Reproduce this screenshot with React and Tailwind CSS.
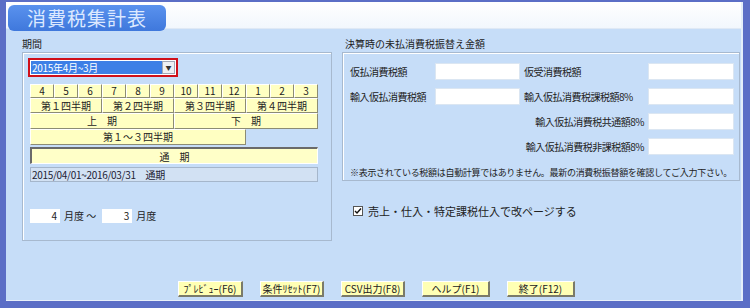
import React from 'react'

const font = { fontFamily: '"Noto Sans CJK JP", "Noto Sans", sans-serif' }

function Cell({ children, w, h = 'h-[14px]' }) {
  return (
    <div className={`${w} ${h} bg-[#ffffc2] border-t border-l border-t-white border-l-white border-r border-b border-r-[#8c8c74] border-b-[#8c8c74] flex items-center justify-center text-[10px] leading-none text-[#222] whitespace-nowrap`}>
      {children}
    </div>
  )
}

function Field({ w = 'w-[85px]' }) {
  return <div className={`${w} h-[17px] bg-white border border-[#dbe6f2]`} />
}

export default function App() {
  const months = ['4', '5', '6', '7', '8', '9', '10', '11', '12', '1', '2', '3']
  const quarters = ['第１四半期', '第２四半期', '第３四半期', '第４四半期']
  const buttons = [
    ['ﾌﾟﾚﾋﾞｭｰ(F6)', 'w-[65px]'],
    ['条件ﾘｾｯﾄ(F7)', 'w-[64px]'],
    ['CSV出力(F8)', 'w-[64px]'],
    ['ヘルプ(F1)', 'w-[68px]'],
    ['終了(F12)', 'w-[68px]'],
  ]

  return (
    <div style={font} className="w-[750px] h-[308px] bg-[#5b6ec6] pt-[2px] pl-[6px] pr-[7px] pb-[7px] overflow-hidden">
      <div className="h-full bg-[#c6ddf8] flex flex-col border-r-2 border-r-[#e4eefa]">
        {/* header */}
        <div className="h-[27px] bg-gradient-to-b from-white to-[#f2f7fd] border-b border-[#dfe9f5] flex">
          <div className="ml-[2px] mt-[3px] w-[158px] h-[26px] rounded-[6px] bg-gradient-to-b from-[#5a92ee] to-[#3f78dc] flex items-center justify-center text-[19px] text-[#dce9ff] tracking-[1px] z-10">
            消費税集計表
          </div>
        </div>

        <div className="flex pl-[16px] pr-[1px] pt-[9px] gap-[10px]">
          {/* left column */}
          <div className="w-[310px] flex flex-col">
            <div className="text-[10px] leading-[12px] text-[#222] h-[13px]">期間</div>
            <div className="mt-[1px] h-[189px] border border-[#a7b9cf] shadow-[inset_1px_1px_0_#ffffff] pl-[5px] pt-[5px]">
              <div className="w-[150px] h-[19px] border-2 border-[#d0101a] p-[1px] flex bg-white">
                <div className="flex-1 bg-[#3d7fe6] text-white text-[10px] leading-[13px] pl-[1px] tracking-[-0.3px]">2015年4月~3月</div>
                <div className="w-[13px] bg-[#eef0f4] border border-[#a0a8b8] flex items-center justify-center text-[6px] text-[#333]">▼</div>
              </div>
              <div className="mt-[7px] ml-[2px] w-[288px] flex flex-col">
                <div className="flex">
                  {months.map((m) => <Cell key={m} w="w-[24px]">{m}</Cell>)}
                </div>
                <div className="flex">
                  {quarters.map((q) => <Cell key={q} w="w-[72px]" h="h-[15px]">{q}</Cell>)}
                </div>
                <div className="flex">
                  <Cell w="w-[144px]" h="h-[16px]">上　期</Cell>
                  <Cell w="w-[144px]" h="h-[16px]">下　期</Cell>
                </div>
                <div className="flex">
                  <Cell w="w-[216px]" h="h-[16px]">第１～３四半期</Cell>
                </div>
                <div className="mt-[2px] h-[17px] bg-[#ffffc8] border-t-2 border-l-2 border-[#6a6a6a] border-r border-b border-r-white border-b-white flex items-center justify-center text-[10px] text-[#222]">
                  通　期
                </div>
                <div className="mt-[3px] h-[15px] bg-[#d2e1f3] border border-[#a5b6cb] text-[10px] leading-[13px] pl-[1px] text-[#223] tracking-[-0.3px]">
                  2015/04/01~2016/03/31　通期
                </div>
              </div>
              <div className="mt-[26px] ml-[2px] flex items-center gap-[4px] text-[10px] text-[#222]">
                <div className="w-[30px] h-[14px] bg-white text-right pr-[3px] leading-[14px]">4</div>
                <span>月度 ～</span>
                <div className="w-[30px] h-[14px] bg-white text-right pr-[3px] leading-[14px] ml-[2px]">3</div>
                <span>月度</span>
              </div>
            </div>
          </div>

          {/* right column */}
          <div className="flex-1 flex flex-col">
            <div className="text-[10px] leading-[12px] text-[#222] h-[13px] pl-[3px]">決算時の未払消費税振替え金額</div>
            <div className="mt-[1px] h-[129px] border border-[#a7b9cf] shadow-[inset_1px_1px_0_#ffffff] pt-[10px] pl-[7px] flex flex-col">
              <div className="grid grid-cols-[85px_85px_128px_86px] gap-y-[8px] items-center text-[10px] text-[#222] tracking-[-0.5px] whitespace-nowrap">
                <span>仮払消費税額</span>
                <Field />
                <span className="pl-[4px]">仮受消費税額</span>
                <Field w="w-[86px]" />

                <span>輸入仮払消費税額</span>
                <Field />
                <span className="pl-[4px]">輸入仮払消費税課税額8%</span>
                <Field w="w-[86px]" />

                <span />
                <span />
                <span className="text-right pr-[4px]">輸入仮払消費税共通額8%</span>
                <Field w="w-[86px]" />

                <span />
                <span />
                <span className="text-right pr-[4px]">輸入仮払消費税非課税額8%</span>
                <Field w="w-[86px]" />
              </div>
              <div className="mt-[11px] text-[9px] text-[#222] tracking-[-0.3px] whitespace-nowrap">
                ※表示されている税額は自動計算ではありません。最新の消費税振替額を確認してご入力下さい。
              </div>
            </div>
            <div className="mt-[22px] pl-[11px] flex items-center gap-[5px] text-[11px] text-[#222] whitespace-nowrap">
              <div className="w-[10px] h-[10px] bg-white border border-[#555] flex items-center justify-center">
                <svg width="8" height="8" viewBox="0 0 8 8"><path d="M1 4 L3 6 L7 1.5" fill="none" stroke="#111" strokeWidth="1.4" /></svg>
              </div>
              <span>売上・仕入・特定課税仕入で改ページする</span>
            </div>
          </div>
        </div>

        {/* buttons */}
        <div className="mt-auto mb-[3px] ml-[172px] flex gap-[17px]">
          {buttons.map(([label, w]) => (
            <div key={label} className={`${w} h-[16px] bg-[#ffffb4] border-t border-l border-t-white border-l-white border-r-2 border-b-2 border-r-[#7a7a6a] border-b-[#7a7a6a] flex items-center justify-center text-[10px] text-[#222] whitespace-nowrap`}>
              {label}
            </div>
          ))}
        </div>
        <div className="h-[1px] bg-[#e8f0fa]" />
      </div>
    </div>
  )
}
